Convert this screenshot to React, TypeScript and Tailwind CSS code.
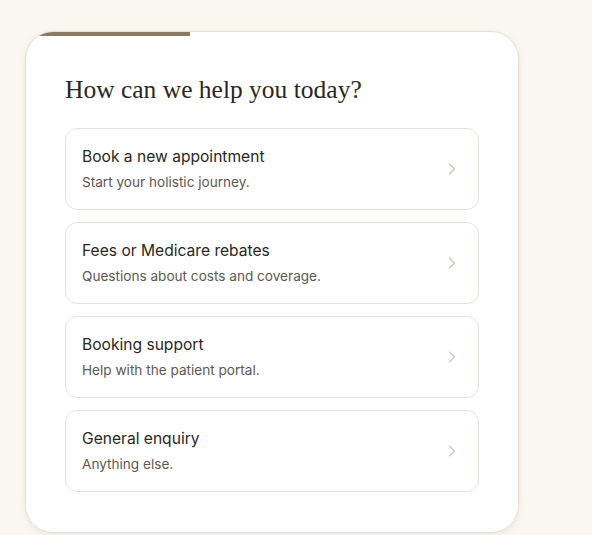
import { ChevronRight } from 'lucide-react';

const options = [
  { title: 'Book a new appointment', desc: 'Start your holistic journey.' },
  { title: 'Fees or Medicare rebates', desc: 'Questions about costs and coverage.' },
  { title: 'Booking support', desc: 'Help with the patient portal.' },
  { title: 'General enquiry', desc: 'Anything else.' },
];

export default function App() {
  return (
    <div className="min-h-screen bg-[#faf7f1] pt-[31px] pl-[25px] font-['Inter',sans-serif]">
      <div className="w-[494px] overflow-hidden rounded-[28px] border border-[#e6e0d4] bg-white shadow-[0_2px_6px_rgba(120,100,70,0.12)]">
        {/* Progress */}
        <div className="h-[4px] w-full">
          <div className="h-full w-1/3 bg-[#8a7b62]" />
        </div>

        <div className="px-[39px] pt-[37px] pb-[40px]">
          <h2 className="mb-[21px] font-['Liberation_Serif',serif] text-[25.5px] leading-[34px] text-[#2a2724]">
            How can we help you today?
          </h2>

          <div className="flex flex-col gap-3">
            {options.map((o) => (
              <button
                key={o.title}
                className="flex h-[82px] w-full items-center justify-between rounded-xl border border-[#e8e3d9] bg-white pl-[16px] pr-[16px] text-left"
              >
                <div className="flex flex-col">
                  <span className="text-[15.6px] leading-[22px] text-[#2a2724]">{o.title}</span>
                  <span className="mt-[4px] text-[13.6px] leading-[20px] text-[#5c5852]">{o.desc}</span>
                </div>
                <ChevronRight className="h-[20px] w-[20px] text-[#cdc6b6]" strokeWidth={1.4} />
              </button>
            ))}
          </div>
        </div>
      </div>
    </div>
  );
}
